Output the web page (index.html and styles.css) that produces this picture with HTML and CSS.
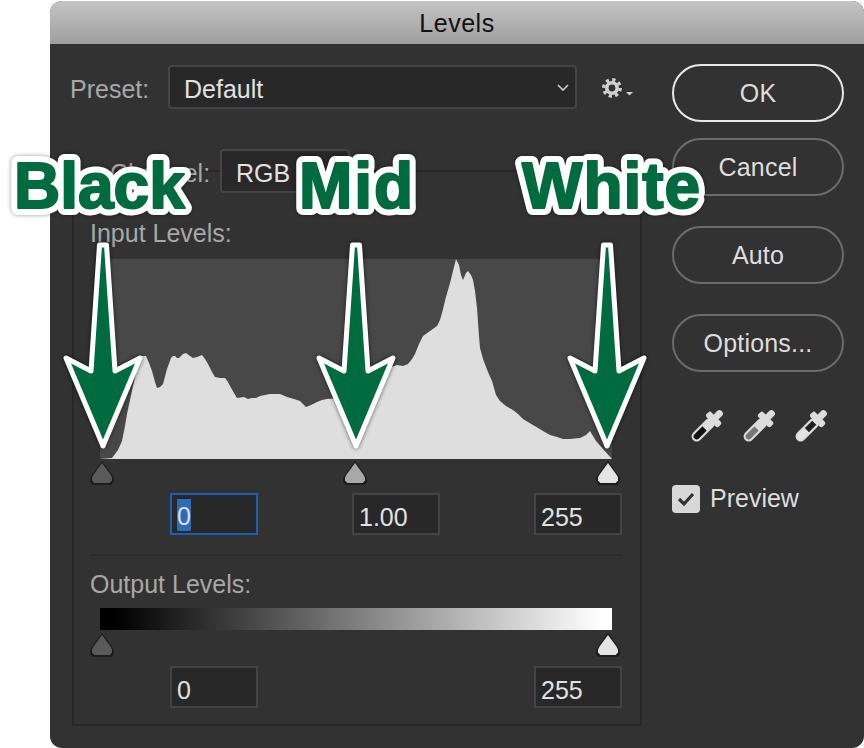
FILE: index.html
```html
<!DOCTYPE html>
<html lang="en">
<head>
    <meta charset="UTF-8">
    <title>Levels</title>
    <link rel="stylesheet" href="styles.css">
</head>
<body>
    <div class="window">
        <div class="titlebar">Levels</div>
        <div class="dialog">
            <!-- Left side -->
            <div class="main">
                <div class="preset-row">
                    <span class="label">Preset:</span>
                    <div class="select select-preset">
                        <span>Default</span>
                        <svg class="chevron" width="14" height="9" viewBox="0 0 14 9"><path d="M2 2l5 5 5-5" fill="none" stroke="#c8c8c8" stroke-width="1.7"/></svg>
                    </div>
                    <svg class="gear" width="32" height="24" viewBox="0 0 32 24">
                        <circle cx="11" cy="11" r="8.2" fill="none" stroke="#d0d0d0" stroke-width="3.4" stroke-dasharray="3.2 3.24"/>
                        <circle cx="11" cy="11" r="5.2" fill="none" stroke="#d0d0d0" stroke-width="3.6"/>
                        <path d="M25 15h7l-3.5 3.5z" fill="#d0d0d0"/>
                    </svg>
                </div>
                <div class="channel-row">
                    <span class="label label-light">Channel:</span>
                    <div class="select select-channel"><span>RGB</span></div>
                </div>
                <div class="group">
                    <div class="group-label">Input Levels:</div>
                    <div class="histogram">
                        <svg width="512" height="200" viewBox="100 258 512 200">
                            <polygon fill="#dedede" points="100,458 112,457 118,449 122,440 125,425 127,413 133,385 140,355 146,355 149,362 152,370 155,381 157,387 160,386 163,383 167,368 171,357 173,355 175,355 177,357 179,357 183,353 186,352 190,355 193,357 197,356 202,354 205,358 208,363 212,371 215,376 220,377 225,377 228,381 230,385 234,392 237,397 244,396 248,398 252,397 256,397 260,395 265,394 270,393 280,393 287,396 294,398 300,400 303,403 306,406 311,404 317,401 322,399 327,398 340,397 350,392 360,388 380,372 391,366 397,364 403,365 408,363 412,358 415,353 419,343 423,335 430,330 437,325 440,319 442,312 446,296 450,282 453,270 456,258 459,264 461,274 463,279 466,272 468,270 471,274 473,279 475,290 477,307 479,335 480,347 483,358 488,371 492,380 496,394 500,400 506,405 513,409 518,413 523,418 533,424 543,430 550,434 557,436 563,438 570,438 580,437 586,434 590,430 596,440 603,448 612,458"/>
                        </svg>
                    </div>
                    <div class="thumbs">
                        <span class="thumb thumb-dark"></span>
                        <span class="thumb thumb-mid"></span>
                        <span class="thumb thumb-light"></span>
                    </div>
                    <div class="fields">
                        <div class="field field-focus"><span class="selected">0</span></div>
                        <div class="field">1.00</div>
                        <div class="field">255</div>
                    </div>
                    <div class="divider"></div>
                    <div class="group-label">Output Levels:</div>
                    <div class="gradient"></div>
                    <div class="thumbs thumbs-output">
                        <span class="thumb thumb-dark"></span>
                        <span class="thumb thumb-light"></span>
                    </div>
                    <div class="fields fields-output">
                        <div class="field">0</div>
                        <div class="field">255</div>
                    </div>
                </div>
            </div>

            <!-- Right side -->
            <div class="side">
                <div class="btn btn-primary">OK</div>
                <div class="btn btn-cancel">Cancel</div>
                <div class="btn btn-spaced">Auto</div>
                <div class="btn btn-spaced">Options...</div>
                <div class="droppers">
                    <svg width="42" height="42" viewBox="0 0 36 36"><g transform="rotate(45 18 18)"><rect x="15" y="0" width="6" height="9" rx="3" fill="#dcdcdc"/><rect x="10.5" y="7" width="15" height="6" rx="2" fill="#dcdcdc"/><rect x="14.5" y="11" width="7" height="23" rx="3.5" fill="#111" stroke="#dcdcdc" stroke-width="1.8"/><rect x="14.5" y="11" width="7" height="10" fill="#dcdcdc"/></g></svg>
                    <svg width="42" height="42" viewBox="0 0 36 36"><g transform="rotate(45 18 18)"><rect x="15" y="0" width="6" height="9" rx="3" fill="#dcdcdc"/><rect x="10.5" y="7" width="15" height="6" rx="2" fill="#dcdcdc"/><rect x="14.5" y="11" width="7" height="23" rx="3.5" fill="#777" stroke="#dcdcdc" stroke-width="1.8"/><rect x="14.5" y="11" width="7" height="10" fill="#dcdcdc"/></g></svg>
                    <svg width="42" height="42" viewBox="0 0 36 36"><g transform="rotate(45 18 18)"><rect x="15" y="0" width="6" height="9" rx="3" fill="#dcdcdc"/><rect x="10.5" y="7" width="15" height="6" rx="2" fill="#dcdcdc"/><rect x="14.5" y="11" width="7" height="23" rx="3.5" fill="#e4e4e4" stroke="#dcdcdc" stroke-width="1.8"/><rect x="15.5" y="14" width="5" height="9" fill="#222"/></g></svg>
                </div>
                <div class="preview">
                    <span class="checkbox">
                        <svg width="20" height="16" viewBox="0 0 20 16"><path d="M3 8l5 5 9-10" fill="none" stroke="#333" stroke-width="3.2"/></svg>
                    </span>
                    <span>Preview</span>
                </div>
            </div>
        </div>
    </div>

    <!-- Annotations on top of the dialog -->
    <svg class="notes" width="864" height="748" viewBox="0 0 864 748">
        <defs>
            <polygon id="arrow" points="-3.5,245 3.5,245 12,371 37,358 0,446 -37,358 -12,371"/>
        </defs>
        <g class="arrows">
            <use href="#arrow" x="103"/>
            <use href="#arrow" x="356"/>
            <use href="#arrow" x="607"/>
        </g>
        <use class="outline" href="#note-black"/>
        <use class="outline" href="#note-mid"/>
        <use class="outline" href="#note-white"/>
        <g class="note">
            <text id="note-black" x="14" y="208">Black</text>
            <text id="note-mid" x="299" y="208" letter-spacing="2">Mid</text>
            <text id="note-white" x="522" y="208" letter-spacing="1">White</text>
        </g>
    </svg>
</body>
</html>
```

FILE: styles.css
```css
body {
    font-family: "Liberation Sans", Arial, sans-serif;
    margin: 0;
    background-color: #fff;
    width: 864px;
    height: 748px;
    overflow: hidden;
    position: relative;
}
.window {
    margin: 1px 0 0 50px;
    width: 814px;
    height: 747px;
    background-color: #323232;
    border-radius: 12px;
    overflow: hidden;
}
.titlebar {
    height: 43px;
    line-height: 44px;
    text-align: center;
    font-size: 25px;
    letter-spacing: 0.5px;
    color: #111;
    background: linear-gradient(#c4c4c4, #9e9e9e);
}
.dialog {
    display: flex;
    padding: 21px 20px 0 20px;
}
.main {
    width: 572px;
    margin-right: 30px;
}
.preset-row {
    display: flex;
    align-items: center;
    height: 44px;
}
.label {
    font-size: 25px;
    color: #a8a8a8;
    width: 98px;
    padding-top: 4px;
}
.select {
    box-sizing: border-box;
    height: 44px;
    display: flex;
    align-items: center;
    justify-content: space-between;
    background-color: #282828;
    border: 2px solid #454545;
    border-radius: 4px;
    padding: 4px 5px 0 14px;
    font-size: 25px;
    color: #e2e2e2;
}
.select-preset {
    width: 409px;
}
.chevron {
    margin-top: -4px;
}
.gear {
    margin-left: 24px;
    margin-top: 3px;
}
.channel-row {
    display: flex;
    align-items: center;
    height: 44px;
    margin-top: 40px;
    padding-left: 40px;
    position: relative;
}
.label-light {
    width: 110px;
}
.select-channel {
    width: 130px;
}
.group {
    box-sizing: border-box;
    margin: -23px 0 0 2px;
    width: 570px;
    height: 556px;
    border: 2px solid #282828;
    padding: 49px 18px 0 16px;
}
.group-label {
    font-size: 25px;
    line-height: 24px;
    color: #a8a8a8;
}
.histogram {
    margin: 14px 0 0 10px;
    width: 512px;
    height: 200px;
    background-color: #484848;
}
.histogram svg {
    display: block;
}
.thumbs {
    display: flex;
    justify-content: space-between;
    width: 530px;
    margin-top: 2px;
    height: 24px;
}
.thumb {
    box-sizing: border-box;
    width: 24px;
    height: 24px;
    clip-path: polygon(50% 0, 92% 58%, 100% 72%, 100% 88%, 88% 100%, 12% 100%, 0 88%, 0 72%, 8% 58%);
    background-color: #1c1c1c;
    position: relative;
}
.thumb::after {
    content: "";
    position: absolute;
    inset: 2px;
    clip-path: polygon(50% 0, 92% 58%, 100% 72%, 100% 88%, 88% 100%, 12% 100%, 0 88%, 0 72%, 8% 58%);
    background-color: inherit;
}
.thumb-dark::after {
    background-color: #5a5a5a;
}
.thumb-mid::after {
    background-color: #a8a8a8;
}
.thumb-light::after {
    background-color: #e4e4e4;
}
.fields {
    display: flex;
    justify-content: space-between;
    margin: 8px 0 0 80px;
    width: 452px;
}
.field {
    box-sizing: border-box;
    width: 88px;
    height: 42px;
    line-height: 41px;
    background-color: #282828;
    border: 2px solid #444;
    padding-left: 5px;
    padding-top: 2px;
    font-size: 25px;
    color: #e2e2e2;
}
.field-focus {
    border-color: #1c5fb8;
    line-height: 36px;
    padding-top: 3px;
}
.selected {
    display: inline-block;
    height: 32px;
    line-height: 34px;
    background-color: #2a6db3;
    color: #dde;
}
.divider {
    margin: 19px 0 16px 0;
    width: 532px;
    height: 2px;
    background-color: #2a2a2a;
}
.gradient {
    margin: 12px 0 0 10px;
    width: 512px;
    height: 22px;
    background: linear-gradient(to right, #000 3%, #fff 98%);
}
.thumbs-output {
    margin-top: 3px;
}
.fields-output {
    margin-top: 9px;
}
.side {
    width: 172px;
    margin-top: -1px;
}
.btn {
    box-sizing: border-box;
    height: 58px;
    line-height: 54px;
    text-align: center;
    font-size: 25px;
    letter-spacing: 0.2px;
    color: #dedede;
    border: 2px solid #6c6c6c;
    border-radius: 29px;
}
.btn-primary {
    border-color: #e8e8e8;
}
.btn-cancel {
    margin-top: 16px;
}
.btn-spaced {
    margin-top: 30px;
}
.droppers {
    display: flex;
    justify-content: space-between;
    width: 146px;
    margin: 33px 0 0 14px;
}
.preview {
    display: flex;
    align-items: center;
    gap: 10px;
    margin-top: 37px;
    font-size: 25px;
    color: #dedede;
}
.checkbox {
    width: 28px;
    height: 28px;
    border-radius: 4px;
    background-color: #d8d8d8;
    display: flex;
    align-items: center;
    justify-content: center;
}
.notes {
    position: absolute;
    left: 0;
    top: 0;
    font-size: 64px;
    font-weight: bold;
}
.arrows {
    fill: #006b3f;
    stroke: #fff;
    stroke-width: 5;
    stroke-linejoin: round;
    filter: drop-shadow(0 0 2px rgba(0, 0, 0, 0.6));
}
.outline {
    fill: #fff;
    stroke: #fff;
    stroke-width: 14;
    stroke-linejoin: round;
    filter: drop-shadow(0 0 2px rgba(0, 0, 0, 0.4));
}
.note {
    fill: #006b3f;
    stroke: #006b3f;
    stroke-width: 2;
    stroke-linejoin: round;
}
```
